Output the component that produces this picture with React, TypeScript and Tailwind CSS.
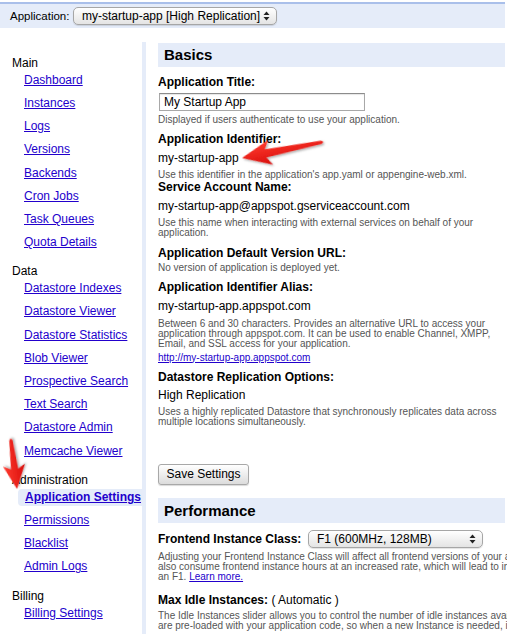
import React from "react";

function UpDown() {
  return (
    <svg width="7" height="10" viewBox="0 0 7 10" className="shrink-0">
      <path d="M3.5 0.5 L6.5 4 L0.5 4 Z" fill="#222" />
      <path d="M3.5 9.5 L6.5 6 L0.5 6 Z" fill="#222" />
    </svg>
  );
}

function Help({ children, className = "" }: { children: React.ReactNode; className?: string }) {
  return (
    <div className={`text-[10px] leading-[10px] text-[#555] whitespace-nowrap ${className}`}>{children}</div>
  );
}

function Label({ children, className = "" }: { children: React.ReactNode; className?: string }) {
  return <div className={`text-[12px] leading-[14px] font-bold whitespace-nowrap ${className}`}>{children}</div>;
}

function Value({ children, className = "" }: { children: React.ReactNode; className?: string }) {
  return <div className={`text-[12px] leading-[14px] whitespace-nowrap ${className}`}>{children}</div>;
}

type Section = { title: string; links: string[]; active?: string };

const sections: Section[] = [
  {
    title: "Main",
    links: ["Dashboard", "Instances", "Logs", "Versions", "Backends", "Cron Jobs", "Task Queues", "Quota Details"],
  },
  {
    title: "Data",
    links: [
      "Datastore Indexes",
      "Datastore Viewer",
      "Datastore Statistics",
      "Blob Viewer",
      "Prospective Search",
      "Text Search",
      "Datastore Admin",
      "Memcache Viewer",
    ],
  },
  {
    title: "Administration",
    links: ["Application Settings", "Permissions", "Blacklist", "Admin Logs"],
    active: "Application Settings",
  },
  { title: "Billing", links: ["Billing Settings"] },
];

export default function App() {
  return (
    <div className="relative w-[507px] h-[635px] overflow-hidden bg-white text-black font-['Liberation_Sans',Arial,Helvetica,sans-serif]">
      {/* Top bar */}
      <div className="mt-[2px] mr-[2px] h-[26px] border-t-2 border-[#a9bfea] bg-[#e5ecf9] flex items-center pl-[10px]">
        <span className="w-[63px] text-[11.5px] leading-[14px] whitespace-nowrap">Application:</span>
        <div className="flex items-center h-[18px] w-[204px] rounded-[5px] border border-[#a6a6a6] bg-gradient-to-b from-[#ffffff] to-[#e4e4e4] pl-[8px] pr-[6px] shadow-[0_1px_1px_rgba(0,0,0,0.12)]">
          <span className="flex-1 text-[12px] leading-[14px] whitespace-nowrap">my-startup-app [High Replication]</span>
          <UpDown />
        </div>
      </div>

      {/* Main area */}
      <div className="flex mt-[14px]">
        {/* Sidebar */}
        <div className="w-[142px] shrink-0 pt-[12.8px]">
          {sections.map((s) => (
            <div key={s.title} className="mb-[6px]">
              <div className="pl-[12px] h-[17px] text-[12px] leading-[17px] whitespace-nowrap">{s.title}</div>
              {s.links.map((l) =>
                l === s.active ? (
                  <div key={l} className="h-[23.2px]">
                    <div className="ml-[18px] h-[17px] pl-[7px] rounded-l-[4px] bg-[#e5ecf9] text-[12px] leading-[17px] font-bold whitespace-nowrap">
                      <a className="text-[#2200cc] underline">{l}</a>
                    </div>
                  </div>
                ) : (
                  <div key={l} className="h-[23.2px]">
                    <div className="pl-[24px] h-[17px] text-[12px] leading-[17px] whitespace-nowrap">
                      <a className="text-[#2200cc] underline">{l}</a>
                    </div>
                  </div>
                )
              )}
            </div>
          ))}
        </div>

        {/* Separator */}
        <div className="w-[4px] shrink-0 bg-[#e5ecf9] self-stretch" />

        {/* Content */}
        <div className="flex-1 min-w-0 pl-[12px] pr-[2px] overflow-hidden">
          <div className="mt-[1px] h-[24px] bg-[#e5ecf9] pl-[6px] text-[15px] leading-[24px] font-bold">Basics</div>

          <Label className="mt-[7.7px]">Application Title:</Label>
          <div className="mt-[4.3px] ml-[1px] h-[18px] w-[206px] border border-[#a8a8a8] border-t-[#8c8c8c] bg-white pl-[4px] text-[12px] leading-[16px] shadow-[inset_0_1px_1px_rgba(0,0,0,0.1)]">
            My Startup App
          </div>
          <Help className="mt-[4px]">Displayed if users authenticate to use your application.</Help>

          <Label className="mt-[7px]">Application Identifier:</Label>
          <Value className="mt-[4.7px]">my-startup-app</Value>
          <Help className="mt-[5.3px]">Use this identifier in the application's app.yaml or appengine-web.xml.</Help>

          <Label>Service Account Name:</Label>
          <Value className="mt-[5px]">my-startup-app@appspot.gserviceaccount.com</Value>
          <Help className="mt-[4.7px]">
            Use this name when interacting with external services on behalf of your
            <br />
            application.
          </Help>

          <Label className="mt-[8.3px]">Application Default Version URL:</Label>
          <Help className="mt-[2.7px]">No version of application is deployed yet.</Help>

          <Label className="mt-[7.3px]">Application Identifier Alias:</Label>
          <Value className="mt-[5px]">my-startup-app.appspot.com</Value>
          <Help className="mt-[6.3px]">
            Between 6 and 30 characters. Provides an alternative URL to access your
            <br />
            application through appspot.com. It can be used to enable Channel, XMPP,
            <br />
            Email, and SSL access for your application.
          </Help>
          <div className="mt-[3.4px] text-[10px] leading-[10px]">
            <a className="text-[#2200cc] underline">http://my-startup-app.appspot.com</a>
          </div>

          <Label className="mt-[7px]">Datastore Replication Options:</Label>
          <Value className="mt-[4.3px]">High Replication</Value>
          <Help className="mt-[5.3px]">
            Uses a highly replicated Datastore that synchronously replicates data across
            <br />
            multiple locations simultaneously.
          </Help>

          <div className="mt-[36.7px] h-[21px] w-[91px] rounded-[3px] border border-[#a8a8a8] bg-gradient-to-b from-[#ffffff] to-[#dcdcdc] text-[12px] leading-[19px] text-center shadow-[0_1px_1px_rgba(0,0,0,0.15)]">
            Save Settings
          </div>

          <div className="mt-[13px] h-[25px] bg-[#e5ecf9] pl-[6px] text-[15px] leading-[25px] font-bold">Performance</div>

          <div className="mt-[7px] h-[18px] flex items-center">
            <div className="w-[150px] shrink-0 text-[12px] leading-[14px] font-bold whitespace-nowrap">Frontend Instance Class:</div>
            <div className="flex items-center h-[18px] w-[175px] shrink-0 rounded-[5px] border border-[#a6a6a6] bg-gradient-to-b from-[#ffffff] to-[#e4e4e4] pl-[8px] pr-[6px] shadow-[0_1px_1px_rgba(0,0,0,0.12)]">
              <span className="flex-1 text-[12px] leading-[14px] whitespace-nowrap">F1 (600MHz, 128MB)</span>
              <UpDown />
            </div>
          </div>
          <Help className="mt-[3.7px]">
            Adjusting your Frontend Instance Class will affect all frontend versions of your application. Higher classes will
            <br />
            also consume frontend instance hours at an increased rate, which will lead to increased costs compared to
            <br />
            an F1. <a className="text-[#2200cc] underline">Learn more.</a>
          </Help>

          <div className="mt-[11.3px] text-[12px] leading-[14px] whitespace-nowrap">
            <span className="font-bold">Max Idle Instances:</span> ( Automatic )
          </div>
          <Help className="mt-[4px]">
            The Idle Instances slider allows you to control the number of idle instances available to serve traffic. Idle instances
            <br />
            are pre-loaded with your application code, so when a new Instance is needed, it can serve traffic immediately.
          </Help>
        </div>
      </div>

      {/* Annotation arrows */}
      <svg className="absolute left-0 top-0 pointer-events-none" width="507" height="635" viewBox="0 0 507 635">
        <defs>
          <linearGradient id="redg" x1="0" y1="0" x2="0" y2="1">
            <stop offset="0" stopColor="#ff3b2f" />
            <stop offset="1" stopColor="#d80d0b" />
          </linearGradient>
          <filter id="sh" x="-20%" y="-20%" width="140%" height="140%">
            <feDropShadow dx="1" dy="1.5" stdDeviation="1.2" floodColor="#000" floodOpacity="0.35" />
          </filter>
        </defs>
        <g transform="translate(242,158) rotate(-11.3)" filter="url(#sh)">
          <path d="M0 0 L29 -12.5 L24 -4 L81 -1.6 L83 0 L81 1.8 L24 4.2 L29 12.5 Z" fill="url(#redg)" />
        </g>
        <g transform="translate(17,489) rotate(-97.3)" filter="url(#sh)">
          <path d="M0 0 L24 -11 L20 -3.6 L49 -1.6 L51 0 L49 1.8 L20 3.8 L24 11 Z" fill="url(#redg)" />
        </g>
      </svg>
    </div>
  );
}
